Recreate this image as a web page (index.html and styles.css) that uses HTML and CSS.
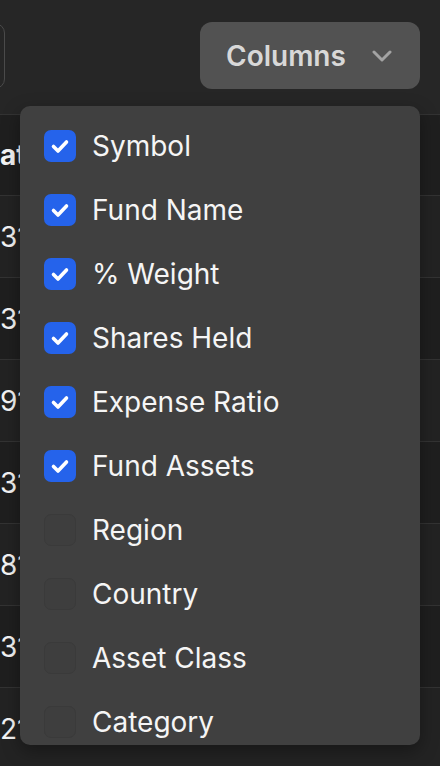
FILE: index.html
```html
<!DOCTYPE html>
<html lang="en">
<head>
<meta charset="utf-8">
<title>Holdings</title>
<link rel="stylesheet" href="styles.css">
</head>
<body>
<div class="page">
  <div class="toolbar">
    <div class="search"></div>
    <button class="columns-btn" type="button">
      <span>Columns</span>
      <svg class="chev" width="20" height="12" viewBox="0 0 20 12"><path d="M2 2l8 8 8-8" fill="none" stroke="currentColor" stroke-width="3" stroke-linecap="round" stroke-linejoin="round"/></svg>
    </button>
  </div>

  <div class="table">
    <div class="row head"><span class="cell">at</span></div>
    <div class="row odd"><span class="cell">31</span></div>
    <div class="row even"><span class="cell">31</span></div>
    <div class="row odd"><span class="cell">91</span></div>
    <div class="row even"><span class="cell">31</span></div>
    <div class="row odd"><span class="cell">81</span></div>
    <div class="row even"><span class="cell">31</span></div>
    <div class="row odd"><span class="cell">21</span></div>
  </div>

  <div class="menu">
    <label class="item"><span class="box on"><svg viewBox="0 0 32 32"><path d="M9.5 16.5l4.5 4.5 8.5-9" fill="none" stroke="#fff" stroke-width="3.6" stroke-linecap="round" stroke-linejoin="round"/></svg></span>Symbol</label>
    <label class="item"><span class="box on"><svg viewBox="0 0 32 32"><path d="M9.5 16.5l4.5 4.5 8.5-9" fill="none" stroke="#fff" stroke-width="3.6" stroke-linecap="round" stroke-linejoin="round"/></svg></span>Fund Name</label>
    <label class="item"><span class="box on"><svg viewBox="0 0 32 32"><path d="M9.5 16.5l4.5 4.5 8.5-9" fill="none" stroke="#fff" stroke-width="3.6" stroke-linecap="round" stroke-linejoin="round"/></svg></span>% Weight</label>
    <label class="item"><span class="box on"><svg viewBox="0 0 32 32"><path d="M9.5 16.5l4.5 4.5 8.5-9" fill="none" stroke="#fff" stroke-width="3.6" stroke-linecap="round" stroke-linejoin="round"/></svg></span>Shares Held</label>
    <label class="item"><span class="box on"><svg viewBox="0 0 32 32"><path d="M9.5 16.5l4.5 4.5 8.5-9" fill="none" stroke="#fff" stroke-width="3.6" stroke-linecap="round" stroke-linejoin="round"/></svg></span>Expense Ratio</label>
    <label class="item"><span class="box on"><svg viewBox="0 0 32 32"><path d="M9.5 16.5l4.5 4.5 8.5-9" fill="none" stroke="#fff" stroke-width="3.6" stroke-linecap="round" stroke-linejoin="round"/></svg></span>Fund Assets</label>
    <label class="item"><span class="box"></span>Region</label>
    <label class="item"><span class="box"></span>Country</label>
    <label class="item"><span class="box"></span>Asset Class</label>
    <label class="item"><span class="box"></span>Category</label>
  </div>
</div>
</body>
</html>
```

FILE: styles.css
```css
html, body {
  margin: 0;
  padding: 0;
  background: #262626;
  overflow: hidden;
}

.page {
  position: relative;
  width: 440px;
  height: 766px;
  font-family: Inter, "Noto Sans", sans-serif;
  color: #f5f5f5;
  overflow: hidden;
}

.toolbar {
  display: flex;
  justify-content: space-between;
  align-items: center;
  padding: 22px 20px 0 0;
  height: 67px;
}

.search {
  width: 240px;
  height: 64px;
  margin-left: -237px;
  border: 1.5px solid #4a4a4a;
  border-radius: 10px;
  background: #262626;
}

.columns-btn {
  display: flex;
  align-items: center;
  gap: 26px;
  width: 220px;
  height: 67px;
  padding: 0 0 0 26px;
  border: none;
  border-radius: 12px;
  background: #525252;
  color: #d8d8d8;
  font-family: inherit;
  font-size: 28px;
  font-weight: 600;
}

.chev {
  color: #a3a3a3;
}

.table {
  margin-top: 25px;
  border-top: 1px solid #333;
}

.row {
  display: flex;
  align-items: center;
  height: 81px;
  border-bottom: 1px solid #333;
  font-size: 28px;
}

.head {
  height: 80px;
  background: #1f1f1f;
  font-weight: 700;
}

.odd { background: #232323; }
.even { background: #1f1f1f; }

.cell {
  padding-left: 0;
  white-space: nowrap;
}

.menu {
  position: absolute;
  top: 106px;
  left: 20px;
  width: 400px;
  height: 639px;
  padding-top: 8px;
  box-sizing: border-box;
  background: #404040;
  border-radius: 10px;
  overflow: hidden;
  box-shadow: 0 6px 18px rgba(0, 0, 0, 0.35);
}

.item {
  display: flex;
  align-items: center;
  gap: 16px;
  height: 64px;
  padding-left: 24px;
  font-size: 28px;
  color: #f5f5f5;
}

.box {
  flex: none;
  width: 32px;
  height: 32px;
  box-sizing: border-box;
  border-radius: 7px;
  border: 1.5px solid #3a3a3a;
  background: #3e3e3e;
}

.box.on {
  border: none;
  background: #2563eb;
}

.box svg {
  display: block;
  width: 32px;
  height: 32px;
}
```
